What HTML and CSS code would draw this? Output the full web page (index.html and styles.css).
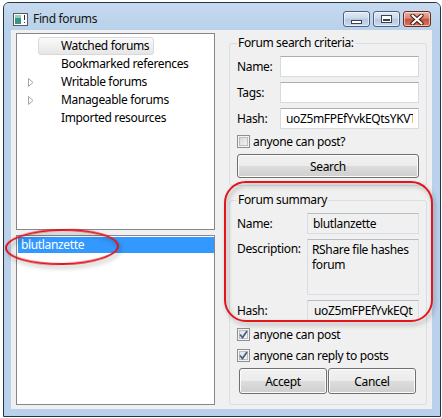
FILE: index.html
```html
<!DOCTYPE html>
<html lang="en">

<head>
    <meta charset="UTF-8">
    <meta name="viewport" content="width=device-width, initial-scale=1.0">
    <title>Find forums</title>
    <link rel="stylesheet" href="styles.css">
</head>

<body>
    <div class="window">
        <div class="titlebar">
            <svg class="app-icon" width="15" height="13" viewBox="0 0 15 13">
                <rect x="0.5" y="0.5" width="14" height="12" fill="#fdfdfd" stroke="#5a5a5a" />
                <rect x="2" y="2" width="6" height="9" fill="#3b9483" />
                <rect x="2" y="2" width="6" height="3" fill="#8fd0c2" />
                <rect x="11" y="2" width="1" height="5" fill="#303030" />
                <rect x="11" y="9" width="1" height="1" fill="#303030" />
            </svg>
            <span class="title">Find forums</span>
            <div class="caption-btns">
                <div class="cap-btn min"><span class="glyph-min"></span></div>
                <div class="cap-btn max"><span class="glyph-max"></span></div>
                <div class="cap-btn close">
                    <svg width="14" height="11" viewBox="0 0 14 11">
                        <path d="M2.5 1.5 L11.5 9.5 M11.5 1.5 L2.5 9.5" stroke="#3a1a14" stroke-width="4.2" stroke-linecap="round" />
                        <path d="M2.5 1.5 L11.5 9.5 M11.5 1.5 L2.5 9.5" stroke="#fff" stroke-width="2.2" stroke-linecap="round" />
                    </svg>
                </div>
            </div>
        </div>

        <div class="client">
            <div class="left-col">
                <div class="tree">
                    <div class="tree-row"><span class="expander"></span><span class="tree-item current">Watched forums</span></div>
                    <div class="tree-row"><span class="expander"></span><span class="tree-item">Bookmarked references</span></div>
                    <div class="tree-row">
                        <span class="expander"><svg width="6" height="9" viewBox="0 0 6 9"><path d="M0.5 0.5 L5 4.5 L0.5 8.5 Z" fill="#fff" stroke="#a6a6a6" /></svg></span>
                        <span class="tree-item">Writable forums</span>
                    </div>
                    <div class="tree-row">
                        <span class="expander"><svg width="6" height="9" viewBox="0 0 6 9"><path d="M0.5 0.5 L5 4.5 L0.5 8.5 Z" fill="#fff" stroke="#a6a6a6" /></svg></span>
                        <span class="tree-item">Manageable forums</span>
                    </div>
                    <div class="tree-row"><span class="expander"></span><span class="tree-item">Imported resources</span></div>
                </div>
                <div class="results">
                    <div class="result selected">blutlanzette</div>
                </div>
            </div>

            <div class="right-col">
                <fieldset class="group">
                    <legend>Forum search criteria:</legend>
                    <div class="form-grid">
                        <label>Name:</label>
                        <input class="field" type="text" value="">
                        <label>Tags:</label>
                        <input class="field" type="text" value="">
                        <label>Hash:</label>
                        <input class="field" type="text" value="uoZ5mFPEfYvkEQtsYKVTpX3r">
                    </div>
                    <div class="check search-check"><span class="box"></span>anyone can post?</div>
                    <button class="btn search-btn">Search</button>
                </fieldset>

                <fieldset class="group summary">
                    <legend>Forum summary</legend>
                    <div class="form-grid wide">
                        <label>Name:</label>
                        <input class="field readonly" type="text" value="blutlanzette" readonly>
                        <label class="top">Description:</label>
                        <textarea class="field readonly desc" readonly>RShare file hashes forum</textarea>
                        <label>Hash:</label>
                        <input class="field readonly hash" type="text" value="uoZ5mFPEfYvkEQtsYKVTpX3r" readonly>
                    </div>
                    <div class="check first"><span class="box checked"><svg width="9" height="9" viewBox="0 0 9 9"><path d="M1 4.5 L3.5 7.5 L8 1" fill="none" stroke="#4a5f8c" stroke-width="1.8" /></svg></span>anyone can post</div>
                    <div class="check"><span class="box checked"><svg width="9" height="9" viewBox="0 0 9 9"><path d="M1 4.5 L3.5 7.5 L8 1" fill="none" stroke="#4a5f8c" stroke-width="1.8" /></svg></span>anyone can reply to posts</div>
                    <div class="dialog-btns">
                        <button class="btn">Accept</button>
                        <button class="btn">Cancel</button>
                    </div>
                </fieldset>
            </div>
        </div>
    </div>

    <!-- red marker rings drawn over the dialog -->
    <div class="mark mark-result"></div>
    <div class="mark mark-summary"></div>
</body>

</html>
```

FILE: styles.css
```css
body {
    position: relative;
    margin: 0;
    width: 442px;
    height: 418px;
    overflow: hidden;
    background-color: #fff;
    font-family: "Noto Sans", "Open Sans", sans-serif;
    font-size: 12px;
    letter-spacing: -0.35px;
    color: #000;
}

.window {
    box-sizing: border-box;
    width: 438px;
    height: 415px;
    margin: 2px 0 0 3px;
    padding: 0 8px 7px 7px;
    border: 1px solid #253447;
    border-radius: 6px 6px 0 0;
    background-color: #b9d1ea;
    display: flex;
    flex-direction: column;
}

/* title bar */
.titlebar {
    height: 27px;
    flex: none;
    display: flex;
    align-items: center;
    padding-top: 5px;
    box-sizing: border-box;
    background: linear-gradient(#c6daef, #b9d1ea);
    margin: 0 -8px 0 -7px;
    padding-left: 9px;
    padding-right: 9px;
    border-radius: 5px 5px 0 0;
}

.app-icon {
    flex: none;
    margin-top: 1px;
}

.title {
    margin-left: 5px;
    color: #151515;
    line-height: 16px;
}

.caption-btns {
    margin-left: auto;
    display: flex;
    gap: 3px;
}

.cap-btn {
    box-sizing: border-box;
    height: 16px;
    width: 27px;
    border: 1px solid #4d5f7c;
    border-radius: 3px;
    background: linear-gradient(#e0eaf6 0%, #cbdaec 45%, #b3c8e1 50%, #c7daef 100%);
    box-shadow: inset 0 0 0 1px rgba(255, 255, 255, 0.55);
    display: flex;
    align-items: center;
    justify-content: center;
}

.cap-btn.close {
    width: 28px;
    border-color: #6b2a20;
    background: linear-gradient(#eab2a4 0%, #d98572 45%, #c5513b 50%, #d9745d 100%);
}

.glyph-min {
    width: 9px;
    height: 2px;
    margin-top: 6px;
    border: 1px solid #3a4250;
    background-color: #fff;
}

.glyph-max {
    box-sizing: border-box;
    width: 11px;
    height: 8px;
    border: 1px solid #3a4250;
    box-shadow: inset 0 0 0 1px #fff, inset 0 2px 0 1px #fff;
    background-color: #3a4250;
}

/* client area */
.client {
    flex: 1;
    display: flex;
    padding: 3px 5px 4px 5px;
    background-color: #f0f0f0;
}

.left-col {
    width: 199px;
    display: flex;
    flex-direction: column;
    gap: 5px;
}

.tree {
    box-sizing: border-box;
    height: 197px;
    padding-top: 3px;
    border: 1px solid #828790;
    background-color: #fff;
}

.tree-row {
    display: flex;
    align-items: center;
    height: 18px;
}

.expander {
    box-sizing: border-box;
    width: 21px;
    height: 18px;
    flex: none;
    padding: 5px 0 0 11px;
}

.expander svg {
    display: block;
}

.tree-item {
    box-sizing: border-box;
    height: 18px;
    line-height: 16px;
    padding: 0 4px 0 22px;
    border: 1px solid transparent;
    white-space: nowrap;
}

.tree-item.current {
    border-color: #d9d9d9;
    border-radius: 3px;
    background: linear-gradient(#fafafa, #e6e6e6);
}

.results {
    flex: 1;
    padding: 1px 0 0 1px;
    border: 1px solid #828790;
    background-color: #fff;
}

.result {
    height: 16px;
    line-height: 16px;
    padding-left: 3px;
}

.result.selected {
    background-color: #3399ff;
    color: #fff;
}

/* right side */
.right-col {
    width: 198px;
    margin-left: 14px;
    margin-top: 2px;
}

fieldset.group {
    margin: 0;
    min-width: 0;
    padding: 5px 7px 7px 7px;
    border: 1px solid #d5dfe5;
    border-radius: 3px;
}

fieldset.group legend {
    padding: 0 1px;
    line-height: 16px;
}

fieldset.summary {
    margin-top: 6px;
    padding-bottom: 10px;
}

.form-grid {
    display: grid;
    grid-template-columns: 43px 1fr;
    align-items: center;
    row-gap: 5px;
}

.form-grid.wide {
    grid-template-columns: 70px 1fr;
}

.form-grid label.top {
    align-self: start;
    padding-top: 1px;
}

.field {
    box-sizing: border-box;
    width: 100%;
    height: 21px;
    margin: 0;
    padding: 0 5px;
    border: 1px solid #d6dbe2;
    border-top-color: #abadb3;
    background-color: #fff;
    font-family: inherit;
    font-size: 12px;
    letter-spacing: inherit;
    color: #000;
    outline: none;
}

.field.readonly {
    background-color: #f0f0f0;
    border-color: #d9dde3;
    border-top-color: #b8bcc4;
}

.field.desc {
    height: 56px;
    padding: 2px 4px;
    line-height: 15px;
    resize: none;
    overflow: hidden;
    display: block;
}

.field.hash {
    padding-left: 6px;
}

.check {
    display: flex;
    align-items: center;
    height: 16px;
    white-space: nowrap;
}

.search-check {
    margin-top: 4px;
}

.summary .check.first {
    margin-top: 5px;
}

.summary .check + .check {
    margin-top: 5px;
}

.box {
    box-sizing: border-box;
    width: 13px;
    height: 13px;
    margin-right: 3px;
    border: 1px solid #8e8f8f;
    background: linear-gradient(135deg, #d4d4d4, #f6f6f6);
    box-shadow: inset 0 0 0 1px #f4f4f4, inset 0 0 0 2px #bdbdbd;
    display: flex;
    align-items: center;
    justify-content: center;
}

.box.checked {
    background: linear-gradient(135deg, #dcdcdc, #fbfbfb);
}

.btn {
    box-sizing: border-box;
    height: 24px;
    margin: 0;
    padding: 0;
    border: 1px solid #707070;
    border-radius: 3px;
    background: linear-gradient(#f2f2f2 0%, #ebebeb 50%, #dddddd 50%, #cfcfcf 100%);
    box-shadow: inset 0 0 0 1px #fbfbfb;
    font-family: inherit;
    font-size: 12px;
    letter-spacing: inherit;
    color: #000;
}

.search-btn {
    width: 100%;
    margin-top: 5px;
    display: block;
}

.dialog-btns {
    display: flex;
    gap: 1px;
    margin: 5px 0 0 2px;
}

.dialog-btns .btn {
    width: 88px;
    height: 26px;
}

/* red marker rings */
.mark {
    position: absolute;
    box-sizing: border-box;
    border: 2px solid #e3141b;
    filter: drop-shadow(2px 3px 2px rgba(0, 0, 0, 0.3));
}

.mark-result {
    left: 5px;
    top: 229px;
    width: 114px;
    height: 36px;
    border-radius: 50%;
    transform: rotate(-1deg);
}

.mark-summary {
    left: 224px;
    top: 181px;
    width: 209px;
    height: 141px;
    border-radius: 22px;
}
```
